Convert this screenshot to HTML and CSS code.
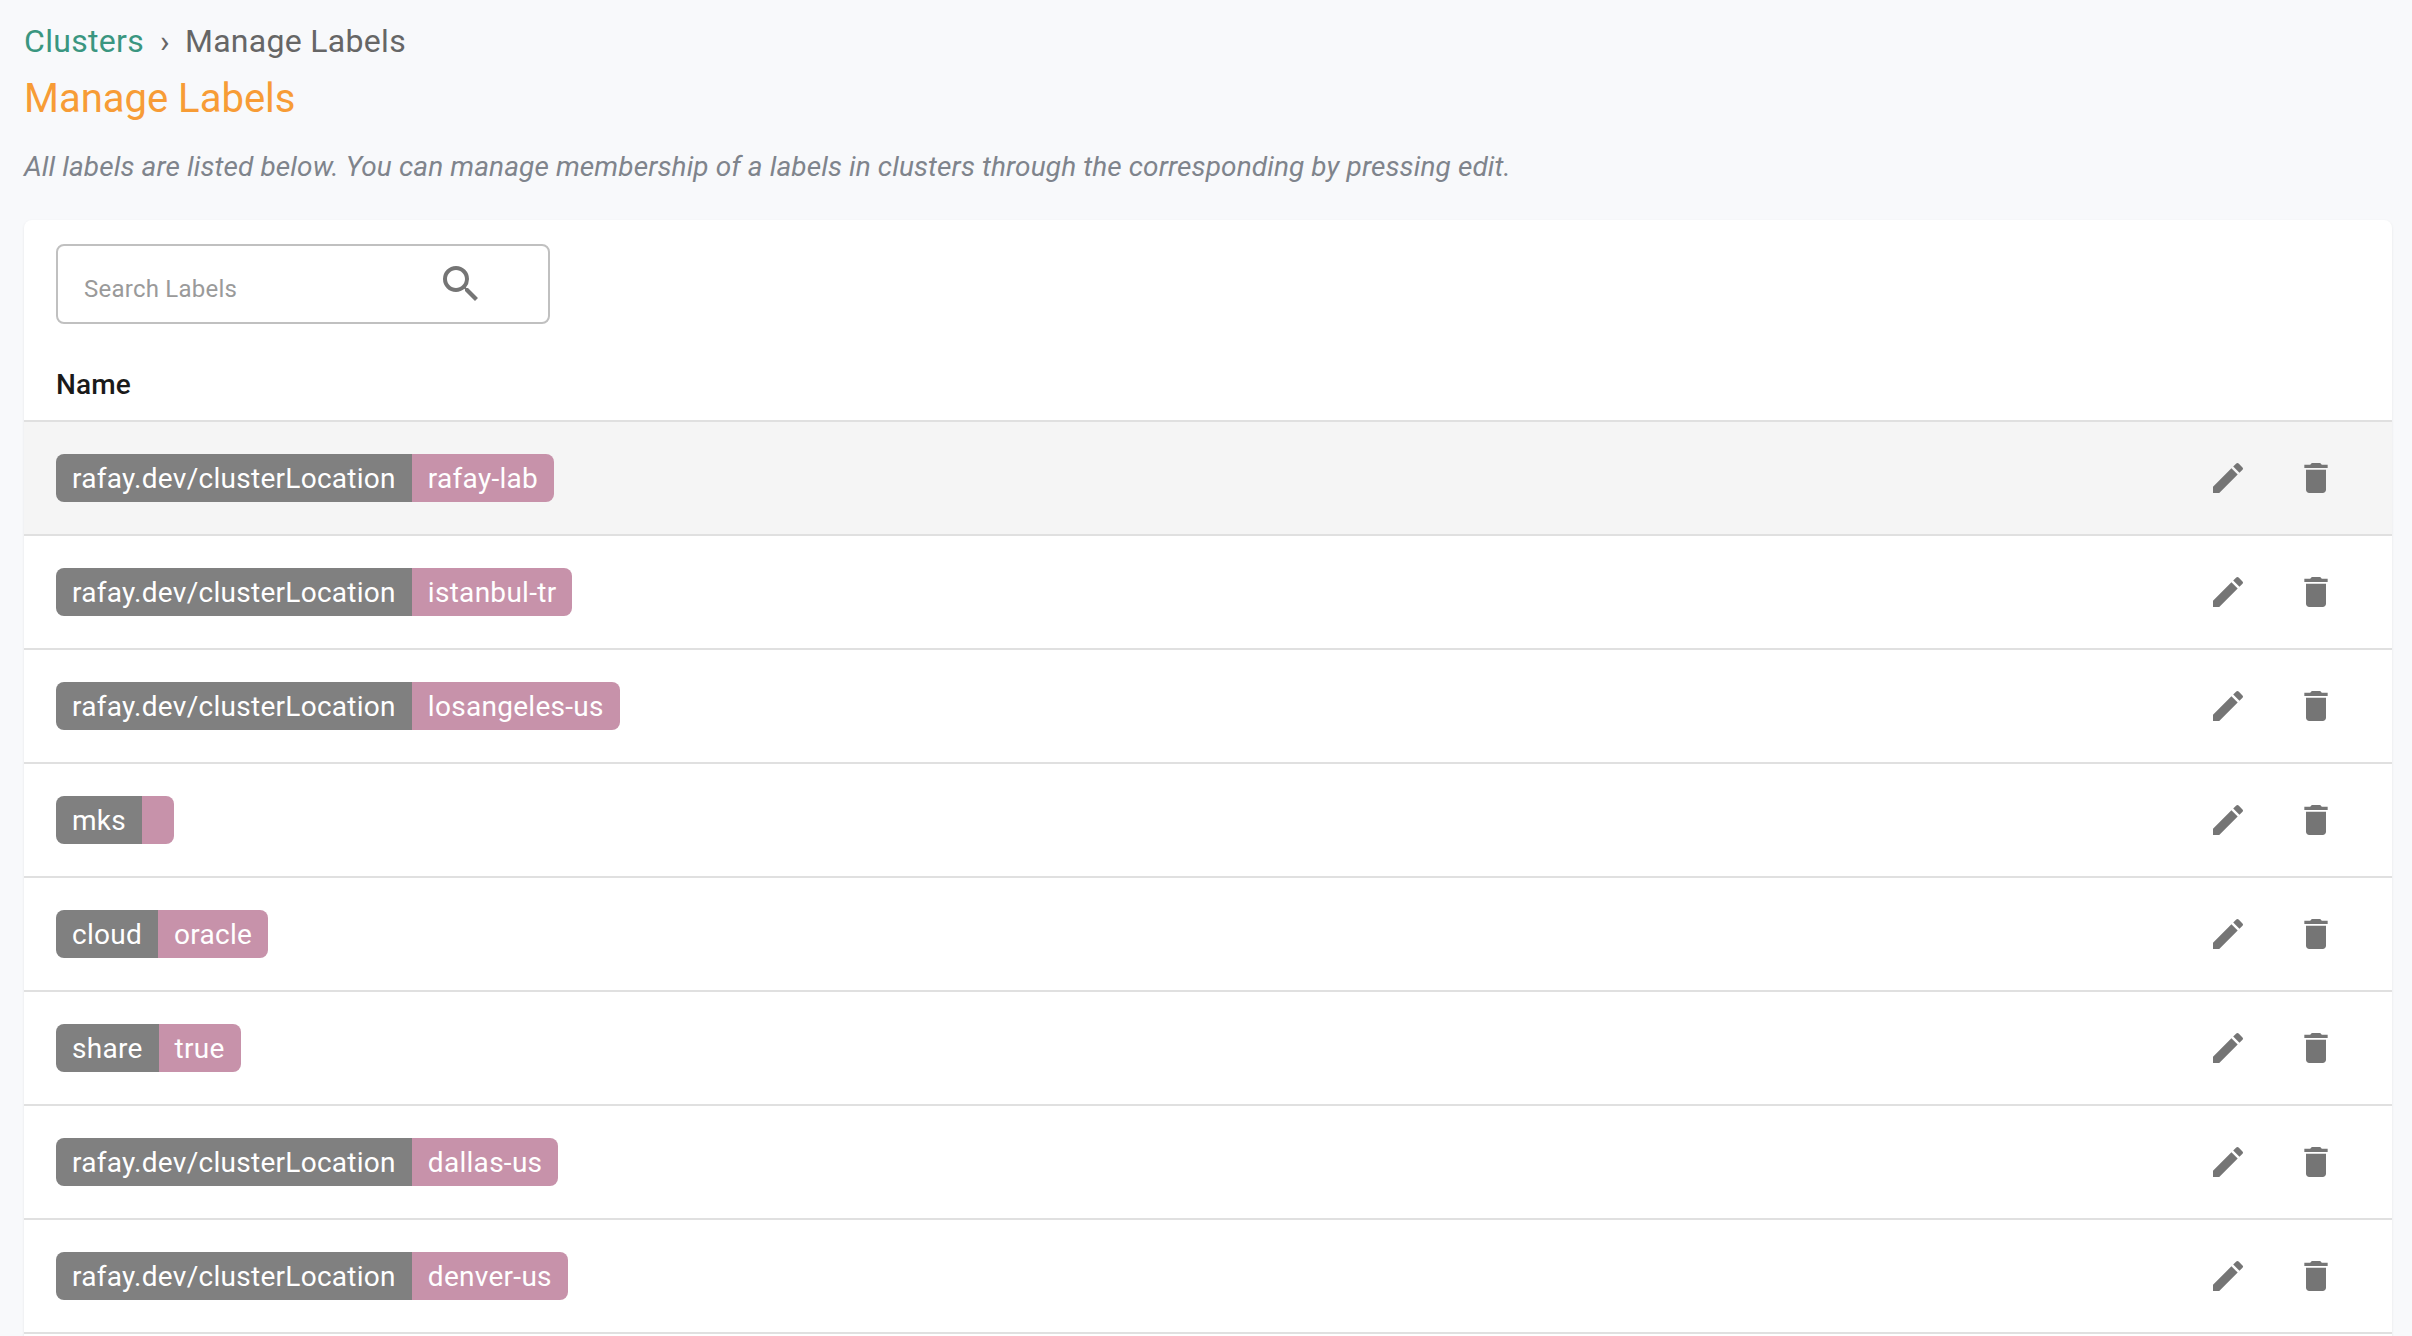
FILE: index.html
```html
<!DOCTYPE html>
<html lang="en">
<head>
  <meta charset="UTF-8">
  <title>Manage Labels</title>
  <link rel="stylesheet" href="styles.css">
</head>
<body>
  <svg class="icon-defs" aria-hidden="true">
    <symbol id="icon-edit" viewBox="0 0 24 24"><path d="M3 17.25V21h3.75L17.81 9.94l-3.75-3.75L3 17.25zM20.71 7.04a1 1 0 0 0 0-1.41l-2.34-2.34a1 1 0 0 0-1.41 0l-1.83 1.83 3.75 3.75 1.83-1.83z"/></symbol>
    <symbol id="icon-delete" viewBox="0 0 24 24"><path d="M6 19c0 1.1.9 2 2 2h8c1.1 0 2-.9 2-2V7H6v12zM19 4h-3.5l-1-1h-5l-1 1H5v2h14V4z"/></symbol>
  </svg>

  <!-- Cabecalho -->
  <nav class="breadcrumb">
    <a class="crumb-link" href="#">Clusters</a>
    <span class="crumb-sep">›</span>
    <span>Manage Labels</span>
  </nav>
  <h1 class="page-title">Manage Labels</h1>
  <p class="page-desc">All labels are listed below. You can manage membership of a labels in clusters through the corresponding by pressing edit.</p>

  <!-- Tabela de labels -->
  <div class="card">
    <div class="search-box">
      <input class="search-input" type="text" placeholder="Search Labels">
      <svg class="search-icon" viewBox="0 0 24 24"><path d="M15.5 14h-.79l-.28-.27A6.47 6.47 0 0 0 16 9.5 6.5 6.5 0 1 0 9.5 16c1.61 0 3.09-.59 4.23-1.57l.27.28v.79l5 4.99L20.49 19l-4.99-5zm-6 0C7.01 14 5 11.99 5 9.5S7.01 5 9.5 5 14 7.01 14 9.5 11.99 14 9.5 14z"/></svg>
    </div>
    <div class="table-head">Name</div>

    <div class="row row-hover">
      <div class="tag"><span class="tag-key">rafay.dev/clusterLocation</span><span class="tag-value">rafay-lab</span></div>
      <div class="actions">
        <button class="icon-btn"><svg><use href="#icon-edit"/></svg></button>
        <button class="icon-btn"><svg><use href="#icon-delete"/></svg></button>
      </div>
    </div>
    <div class="row">
      <div class="tag"><span class="tag-key">rafay.dev/clusterLocation</span><span class="tag-value">istanbul-tr</span></div>
      <div class="actions">
        <button class="icon-btn"><svg><use href="#icon-edit"/></svg></button>
        <button class="icon-btn"><svg><use href="#icon-delete"/></svg></button>
      </div>
    </div>
    <div class="row">
      <div class="tag"><span class="tag-key">rafay.dev/clusterLocation</span><span class="tag-value">losangeles-us</span></div>
      <div class="actions">
        <button class="icon-btn"><svg><use href="#icon-edit"/></svg></button>
        <button class="icon-btn"><svg><use href="#icon-delete"/></svg></button>
      </div>
    </div>
    <div class="row">
      <div class="tag"><span class="tag-key">mks</span><span class="tag-value"></span></div>
      <div class="actions">
        <button class="icon-btn"><svg><use href="#icon-edit"/></svg></button>
        <button class="icon-btn"><svg><use href="#icon-delete"/></svg></button>
      </div>
    </div>
    <div class="row">
      <div class="tag"><span class="tag-key">cloud</span><span class="tag-value">oracle</span></div>
      <div class="actions">
        <button class="icon-btn"><svg><use href="#icon-edit"/></svg></button>
        <button class="icon-btn"><svg><use href="#icon-delete"/></svg></button>
      </div>
    </div>
    <div class="row">
      <div class="tag"><span class="tag-key">share</span><span class="tag-value">true</span></div>
      <div class="actions">
        <button class="icon-btn"><svg><use href="#icon-edit"/></svg></button>
        <button class="icon-btn"><svg><use href="#icon-delete"/></svg></button>
      </div>
    </div>
    <div class="row">
      <div class="tag"><span class="tag-key">rafay.dev/clusterLocation</span><span class="tag-value">dallas-us</span></div>
      <div class="actions">
        <button class="icon-btn"><svg><use href="#icon-edit"/></svg></button>
        <button class="icon-btn"><svg><use href="#icon-delete"/></svg></button>
      </div>
    </div>
    <div class="row">
      <div class="tag"><span class="tag-key">rafay.dev/clusterLocation</span><span class="tag-value">denver-us</span></div>
      <div class="actions">
        <button class="icon-btn"><svg><use href="#icon-edit"/></svg></button>
        <button class="icon-btn"><svg><use href="#icon-delete"/></svg></button>
      </div>
    </div>
  </div>
</body>
</html>
```

FILE: styles.css
```css
html, body {
  height: 100%;
  overflow: hidden;
}

body {
  margin: 0;
  padding: 22px 20px 0 24px;
  box-sizing: border-box;
  background: #f8f9fb;
  font-family: Roboto, sans-serif;
}

.icon-defs {
  display: none;
}

/* Cabecalho */
.breadcrumb {
  display: flex;
  align-items: center;
  height: 38px;
  font-size: 32px;
  line-height: 38px;
  letter-spacing: 0.3px;
  color: #666;
}

.crumb-link {
  color: #3a9680;
  text-decoration: none;
}

.crumb-sep {
  margin: 0 15px 0 16px;
  font-size: 32px;
}

.page-title {
  margin: 16px 0 0;
  font-size: 40px;
  line-height: 46px;
  font-weight: 400;
  color: #f79c36;
}

.page-desc {
  margin: 28px 0 0;
  font-size: 28px;
  line-height: 34px;
  font-style: italic;
  letter-spacing: 0.11px;
  color: #7f848c;
}

/* Tabela */
.card {
  margin-top: 36px;
  padding-top: 24px;
  height: 1200px;
  background: #fff;
  border-radius: 8px 8px 0 0;
  box-shadow: 0 1px 3px rgba(0, 0, 0, 0.08);
}

.search-box {
  display: flex;
  align-items: center;
  width: 494px;
  height: 80px;
  box-sizing: border-box;
  margin-left: 32px;
  padding: 0 63px 0 26px;
  border: 2px solid #c0c0c0;
  border-radius: 8px;
  background: #fff;
}

.search-input {
  flex: 1;
  min-width: 0;
  padding: 0;
  margin-top: 10px;
  border: none;
  outline: none;
  background: none;
  font-family: Roboto, sans-serif;
  font-size: 24px;
  letter-spacing: 0.24px;
}

.search-input::placeholder {
  color: #9a9a9a;
  opacity: 1;
}

.search-icon {
  width: 48px;
  height: 48px;
  fill: #757575;
}

.table-head {
  margin-top: 24px;
  padding-left: 32px;
  height: 72px;
  line-height: 74px;
  font-size: 28px;
  font-weight: 500;
  letter-spacing: 0.1px;
  color: #1a1a1a;
}

.row {
  display: flex;
  align-items: center;
  justify-content: space-between;
  height: 112px;
  padding: 0 32px;
  border-top: 2px solid #e0e0e0;
}

.row:last-child {
  border-bottom: 2px solid #e0e0e0;
}

.row-hover {
  background: #f5f5f5;
}

.tag {
  display: flex;
  height: 48px;
  line-height: 50px;
  font-size: 28px;
  letter-spacing: 0.28px;
  color: #fff;
  border-radius: 8px;
  overflow: hidden;
}

.tag-key {
  padding: 0 16px;
  background: #808080;
}

.tag-value {
  padding: 0 16px;
  background: #c792aa;
}

.actions {
  display: flex;
}

.icon-btn {
  display: flex;
  padding: 0 24px;
  border: none;
  background: none;
  cursor: pointer;
}

.icon-btn svg {
  width: 40px;
  height: 40px;
  fill: #757575;
}
```
